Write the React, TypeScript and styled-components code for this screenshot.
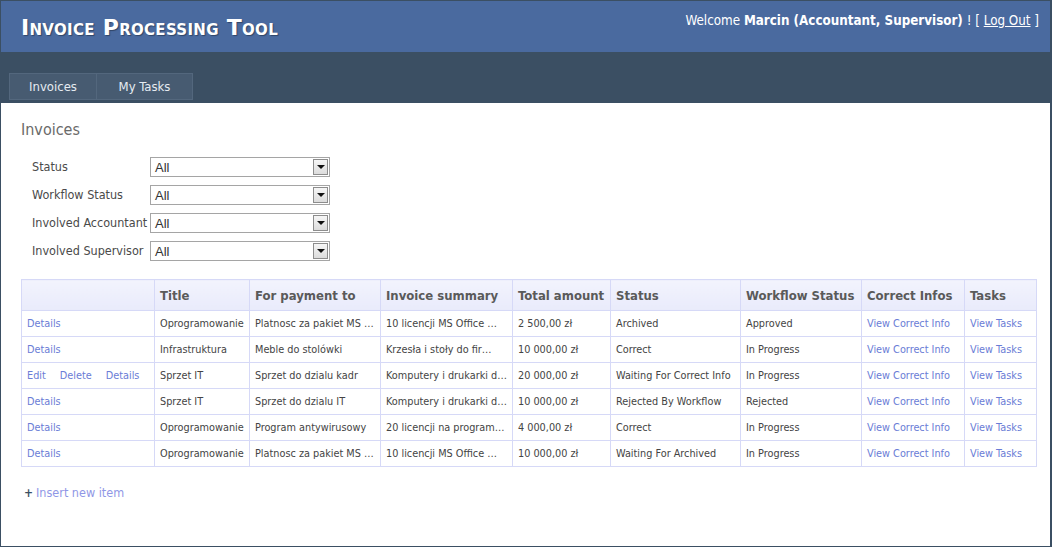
import styled, { createGlobalStyle } from "styled-components";

const GlobalStyle = createGlobalStyle`
  html, body {
    margin: 0;
    padding: 0;
    background: #ffffff;
  }
  body {
    font-family: "DejaVu Sans Condensed", "DejaVu Sans", Verdana, sans-serif;
    font-stretch: condensed;
  }
`;

const Page = styled.div`
  box-sizing: border-box;
  width: 1052px;
  height: 547px;
  border: 1px solid #3b4f63;
  border-right-width: 2px;
  display: flex;
  flex-direction: column;
  overflow: hidden;
  background: #fff;
`;

const Header = styled.header`
  height: 51px;
  background: #4a6a9f;
  display: flex;
  justify-content: space-between;
  align-items: flex-start;
  padding: 0 11px 0 20px;
`;

const Logo = styled.h1`
  margin: 14px 0 0;
  font-family: "DejaVu Sans", Verdana, sans-serif;
  font-stretch: normal;
  font-variant: small-caps;
  font-weight: bold;
  font-size: 22px;
  letter-spacing: 0.3px;
  color: #ffffff;
  text-shadow: 1px 1px 1px rgba(0, 0, 0, 0.35);
`;

const Welcome = styled.div`
  margin-top: 12px;
  font-size: 13.3px;
  color: #ffffff;
  b {
    font-weight: bold;
  }
  a {
    color: #ffffff;
    text-decoration: underline;
  }
`;

const Nav = styled.nav`
  height: 51px;
  background: #3b4f63;
  display: flex;
  align-items: flex-end;
  padding: 0 0 3px 8px;
  box-sizing: border-box;
`;

const Tab = styled.div<{ $w: number }>`
  width: ${(p) => p.$w}px;
  height: 27px;
  box-sizing: border-box;
  background: #475b71;
  border: 1px solid #53677d;
  margin-right: -1px;
  display: flex;
  align-items: center;
  justify-content: center;
  font-size: 13px;
  color: #e6ebf1;
`;

const Content = styled.main`
  padding: 17px 16px 0 20px;
  flex: 1;
`;

const Heading = styled.h2`
  margin: 0 0 18px;
  font-size: 16px;
  font-weight: normal;
  color: #6a6a6a;
`;

const Filters = styled.div`
  display: grid;
  grid-template-columns: 118px 180px;
  row-gap: 8px;
  padding-left: 11px;
  margin-bottom: 18px;
`;

const Label = styled.span`
  font-size: 12.5px;
  color: #4a4a4a;
  line-height: 20px;
  white-space: nowrap;
`;

const Select = styled.div`
  height: 20px;
  box-sizing: border-box;
  border: 1px solid #a5a5a5;
  display: flex;
  align-items: center;
  justify-content: space-between;
  padding-left: 4px;
  font-family: "Liberation Sans", Arial, sans-serif;
  font-stretch: normal;
  font-size: 13px;
  color: #333;
  background: #fff;
`;

const Arrow = styled.span`
  width: 15px;
  height: 16px;
  margin-right: 1px;
  box-sizing: border-box;
  border: 1px solid #8d8d8d;
  background: linear-gradient(#f6f6f6, #dcdcdc);
  display: flex;
  align-items: center;
  justify-content: center;
  &::after {
    content: "";
    border-left: 4px solid transparent;
    border-right: 4px solid transparent;
    border-top: 4px solid #111;
  }
`;

const Table = styled.table`
  width: 1015px;
  border-collapse: collapse;
  table-layout: fixed;
  font-size: 10.8px;
`;

const Th = styled.th<{ $w: number }>`
  width: ${(p) => p.$w}px;
  height: 31px;
  box-sizing: border-box;
  padding: 0 3px 0 5px;
  border: 1px solid #d6d9f7;
  background: linear-gradient(#f2f3fd, #e9ebfb);
  text-align: left;
  font-size: 13px;
  font-weight: bold;
  color: #5a5a5a;
  white-space: nowrap;
  overflow: hidden;
`;

const Td = styled.td`
  height: 26px;
  box-sizing: border-box;
  padding: 0 3px 0 5px;
  border: 1px solid #d6d9f7;
  color: #444;
  white-space: nowrap;
  overflow: hidden;
`;

const Link = styled.a`
  color: #6a7cd6;
  text-decoration: none;
  margin-right: 14px;
  &:last-child {
    margin-right: 0;
  }
`;

const Insert = styled.div`
  margin-top: 18px;
  padding-left: 3px;
  display: flex;
  align-items: center;
  gap: 3px;
  font-size: 12.5px;
  color: #8f97e6;
`;

const Plus = styled.span`
  font-weight: bold;
  font-size: 12px;
  color: #3b4f63;
`;

const cols = [
  { h: "", w: 133 },
  { h: "Title", w: 95 },
  { h: "For payment to", w: 131 },
  { h: "Invoice summary", w: 132 },
  { h: "Total amount", w: 98 },
  { h: "Status", w: 130 },
  { h: "Workflow Status", w: 121 },
  { h: "Correct Infos", w: 103 },
  { h: "Tasks", w: 72 },
];

// texts come truncated to 22 characters, as the list view shows them
const cut = (s: string) => (s.length > 22 ? s.slice(0, 22) + "…" : s);

const rows = [
  { edit: false, title: "Oprogramowanie", to: "Platnosc za pakiet MS Office", sum: "10 licencji MS Office 2010", amt: "2 500,00 zł", st: "Archived", wf: "Approved" },
  { edit: false, title: "Infrastruktura", to: "Meble do stolówki", sum: "Krzesła i stoły do firmy", amt: "10 000,00 zł", st: "Correct", wf: "In Progress" },
  { edit: true, title: "Sprzet IT", to: "Sprzet do dzialu kadr", sum: "Komputery i drukarki dla kadr", amt: "20 000,00 zł", st: "Waiting For Correct Info", wf: "In Progress" },
  { edit: false, title: "Sprzet IT", to: "Sprzet do dzialu IT", sum: "Komputery i drukarki dla IT", amt: "10 000,00 zł", st: "Rejected By Workflow", wf: "Rejected" },
  { edit: false, title: "Oprogramowanie", to: "Program antywirusowy", sum: "20 licencji na program antywirusowy", amt: "4 000,00 zł", st: "Correct", wf: "In Progress" },
  { edit: false, title: "Oprogramowanie", to: "Platnosc za pakiet MS Office", sum: "10 licencji MS Office 2010", amt: "10 000,00 zł", st: "Waiting For Archived", wf: "In Progress" },
];

const filters = ["Status", "Workflow Status", "Involved Accountant", "Involved Supervisor"];

export default function App() {
  return (
    <>
      <GlobalStyle />
      <Page>
        <Header>
          <Logo>Invoice Processing Tool</Logo>
          <Welcome>
            Welcome <b>Marcin (Accountant, Supervisor)</b> ! [ <a href="#">Log Out</a> ]
          </Welcome>
        </Header>
        <Nav>
          <Tab $w={88}>Invoices</Tab>
          <Tab $w={97}>My Tasks</Tab>
        </Nav>
        <Content>
          <Heading>Invoices</Heading>
          <Filters>
            {filters.map((f) => [
              <Label key={f}>{f}</Label>,
              <Select key={f + "-select"}>
                All
                <Arrow />
              </Select>,
            ])}
          </Filters>
          <Table>
            <thead>
              <tr>
                {cols.map((c) => (
                  <Th key={c.h} $w={c.w}>
                    {c.h}
                  </Th>
                ))}
              </tr>
            </thead>
            <tbody>
              {rows.map((r, i) => (
                <tr key={i}>
                  <Td>
                    {r.edit && <Link>Edit</Link>}
                    {r.edit && <Link>Delete</Link>}
                    <Link>Details</Link>
                  </Td>
                  <Td>{r.title}</Td>
                  <Td>{cut(r.to)}</Td>
                  <Td>{cut(r.sum)}</Td>
                  <Td>{r.amt}</Td>
                  <Td>{r.st}</Td>
                  <Td>{r.wf}</Td>
                  <Td>
                    <Link>View Correct Info</Link>
                  </Td>
                  <Td>
                    <Link>View Tasks</Link>
                  </Td>
                </tr>
              ))}
            </tbody>
          </Table>
          <Insert>
            <Plus>+</Plus>
            Insert new item
          </Insert>
        </Content>
      </Page>
    </>
  );
}
